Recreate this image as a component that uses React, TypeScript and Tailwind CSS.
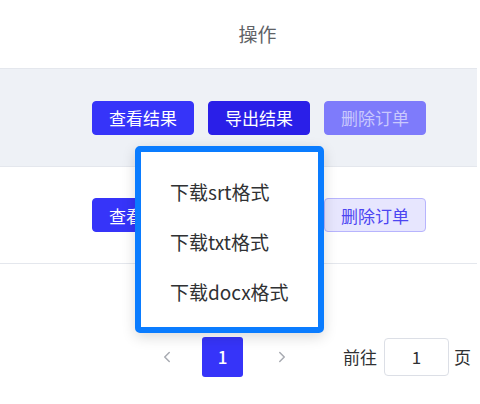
import { ChevronLeft, ChevronRight } from 'lucide-react';

const font = { fontFamily: '"Noto Sans CJK SC", "Liberation Sans", sans-serif' };

function Btn({ label, variant }: { label: string; variant: 'primary' | 'dark' | 'disabled' | 'light' }) {
  const styles = {
    primary: 'bg-[#3634f9] text-white border-[#3634f9]',
    dark: 'bg-[#2a1fe8] text-white border-[#2a1fe8]',
    disabled: 'bg-[#7e7bfb] text-[#c9c8fd] border-[#7e7bfb]',
    light: 'bg-[#e7e6fe] text-[#4c45f2] border-[#b7b4fd]',
  }[variant];
  return (
    <button className={`h-[34px] w-[102px] rounded-[4px] border text-[17px] leading-none ${styles}`}>
      {label}
    </button>
  );
}

export default function App() {
  return (
    <div className="relative h-[404px] w-[480px] bg-white" style={font}>
      <div className="w-[477px]">
        <div className="flex h-[68px] items-center justify-center pl-[38px] text-[19px] text-[#606266]">
          操作
        </div>
        <div className="flex h-[98px] items-center gap-[14px] border-t border-[#e4e7ed] bg-[#eef1f6] pl-[92px]">
          <Btn label="查看结果" variant="primary" />
          <Btn label="导出结果" variant="dark" />
          <Btn label="删除订单" variant="disabled" />
        </div>
        <div className="flex h-[98px] items-center gap-[14px] border-y border-[#e4e7ed] bg-white pl-[92px]">
          <Btn label="查看结果" variant="primary" />
          <Btn label="导出结果" variant="primary" />
          <Btn label="删除订单" variant="light" />
        </div>
      </div>

      <div className="mt-[73px] flex h-[40px] items-center text-[16px] text-[#606266]">
        <ChevronLeft className="ml-[158px] h-[18px] w-[18px] text-[#a8abb2]" strokeWidth={2} />
        <div className="ml-[26px] flex h-[40px] w-[41px] items-center justify-center rounded-[3px] bg-[#3634f9] text-[17px] font-medium text-white">
          1
        </div>
        <ChevronRight className="ml-[30px] h-[18px] w-[18px] text-[#a8abb2]" strokeWidth={2} />
        <span className="ml-[52px] text-[17px] text-[#303133]">前往</span>
        <div className="ml-[7px] flex h-[38px] w-[65px] items-center justify-center rounded-[4px] border border-[#dcdfe6] text-[17px] text-[#303133]">
          1
        </div>
        <span className="ml-[5px] text-[17px] text-[#303133]">页</span>
      </div>

      <div className="absolute left-[135px] top-[146px] h-[187px] w-[189px] rounded-[5px] border-[6px] border-[#0a7cff] bg-white pt-[15px] pl-[29px] text-[19px] text-[#303133] shadow-[0_4px_14px_rgba(0,0,0,0.15)]">
        <div className="flex h-[50px] items-center">下载srt格式</div>
        <div className="flex h-[50px] items-center">下载txt格式</div>
        <div className="flex h-[50px] items-center">下载docx格式</div>
      </div>
    </div>
  );
}
